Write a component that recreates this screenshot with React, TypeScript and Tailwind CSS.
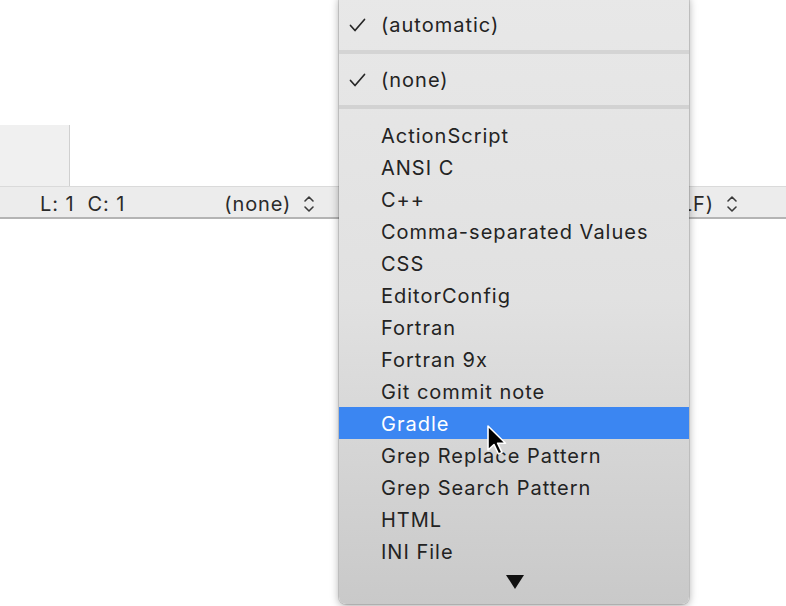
import React from "react";

const items = [
  "ActionScript",
  "ANSI C",
  "C++",
  "Comma-separated Values",
  "CSS",
  "EditorConfig",
  "Fortran",
  "Fortran 9x",
  "Git commit note",
  "Gradle",
  "Grep Replace Pattern",
  "Grep Search Pattern",
  "HTML",
  "INI File",
];

function Chevrons() {
  return (
    <svg width="12" height="20" viewBox="0 0 12 20" className="ml-[12px]">
      <polyline points="2,7 6,3 10,7" fill="none" stroke="#3a3a3a" strokeWidth="1.6" strokeLinecap="round" strokeLinejoin="round" />
      <polyline points="2,13 6,17 10,13" fill="none" stroke="#3a3a3a" strokeWidth="1.6" strokeLinecap="round" strokeLinejoin="round" />
    </svg>
  );
}

function Check() {
  return (
    <svg width="17" height="14" viewBox="0 0 17 14">
      <polyline points="1.5,7.5 6,12.5 15.5,1.5" fill="none" stroke="#262626" strokeWidth="1.7" strokeLinecap="round" strokeLinejoin="round" />
    </svg>
  );
}

export default function App() {
  return (
    <div className="relative w-[786px] h-[606px] bg-white overflow-hidden" style={{ fontFamily: "Inter, 'Noto Sans', sans-serif" }}>
      <div className="h-[125px]" />
      <div className="flex h-[61px]">
        <div className="w-[70px] bg-[#f0f0f0] border-r border-[#d0d0d0]" />
        <div className="flex-1 bg-white" />
      </div>
      <div className="flex items-center h-[33px] pt-[3px] bg-[#ececec] border-t border-[#dadada] border-b-2 border-b-[#b4b4b4] text-[20px] tracking-[0.9px] text-[#2a2a2a]">
        <span className="ml-[40px] whitespace-pre">L: 1  C: 1</span>
        <span className="ml-[99px]">(none)</span>
        <Chevrons />
        <div className="flex-1" />
        <span>Unix (LF)</span>
        <Chevrons />
        <div className="w-[48px]" />
      </div>

      {/* dropdown menu */}
      <div className="absolute left-[339px] top-[-6px] w-[350px] h-[610px] rounded-[7px] bg-gradient-to-b from-[#e8e8e8] via-[#e1e1e1] to-[#c9c9c9] shadow-[0_2px_8px_rgba(0,0,0,0.35),0_0_0_1px_rgba(0,0,0,0.12)] text-[20px] tracking-[1px] text-[#232323]">
        <div className="h-[14px]" />
        <div className="flex items-center h-[32px] pt-[1px]">
          <div className="w-[42px] pl-[10px]"><Check /></div>
          <span>(automatic)</span>
        </div>
        <div className="h-[23px] flex flex-col justify-center">
          <div className="h-[4px] bg-[#d4d4d4]" />
        </div>
        <div className="flex items-center h-[32px] pt-[1px]">
          <div className="w-[42px] pl-[10px]"><Check /></div>
          <span>(none)</span>
        </div>
        <div className="h-[24px] flex flex-col justify-center">
          <div className="h-[4px] bg-[#d2d2d2]" />
        </div>
        {items.map((it) => (
          <div
            key={it}
            className={
              it === "Gradle"
                ? "flex items-center h-[32px] pt-[1px] pl-[42px] bg-[#3b86f2] text-white"
                : "flex items-center h-[32px] pt-[1px] pl-[42px]"
            }
          >
            {it}
          </div>
        ))}
        <div className="flex justify-center pt-[7px] pl-[2px]">
          <svg width="20" height="16" viewBox="0 0 20 16">
            <polygon points="1,1 19,1 10,15" fill="#111" />
          </svg>
        </div>
      </div>

      {/* mouse cursor */}
      <svg className="absolute left-[486px] top-[424px]" width="24" height="34" viewBox="0 0 24 34">
        <path d="M2 2 L2 26 L8 20.5 L12.5 30 L16 28.4 L11.6 19.2 L19.5 19.2 Z" fill="#000" stroke="#fff" strokeWidth="1.6" strokeLinejoin="round" />
      </svg>
    </div>
  );
}
